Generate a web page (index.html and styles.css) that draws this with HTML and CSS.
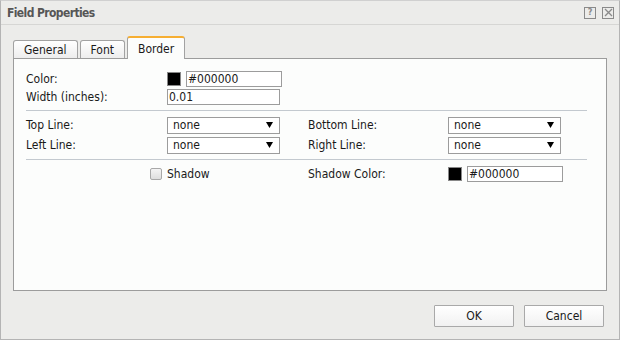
FILE: index.html
```html
<!DOCTYPE html>
<html lang="en">
<head>
    <meta charset="UTF-8">
    <title>Field Properties</title>
    <link rel="stylesheet" href="styles.css">
</head>
<body>
    <div class="dialog">
        <header class="titlebar">
            <h1>Field Properties</h1>
            <div class="title-buttons">
                <span class="title-btn">?</span>
                <span class="title-btn">
                    <svg width="9" height="9" viewBox="0 0 9 9"><path d="M1 1L8 8M8 1L1 8" stroke="#8a8a8a" stroke-width="1.3" fill="none"/></svg>
                </span>
            </div>
        </header>

        <div class="dialog-body">
            <div class="tabs">
                <button class="tab">General</button>
                <button class="tab">Font</button>
                <button class="tab active">Border</button>
            </div>

            <section class="panel">
                <div class="form-grid">
                    <label>Color:</label>
                    <div class="color-field">
                        <span class="swatch"></span>
                        <input class="text-input short" type="text" value="#000000">
                    </div>
                    <span></span><span></span>

                    <label>Width (inches):</label>
                    <input class="text-input" type="text" value="0.01">
                    <span></span><span></span>
                </div>

                <div class="separator"></div>

                <div class="form-grid wide-gap">
                    <label>Top Line:</label>
                    <div class="select"><span>none</span><svg width="7" height="6" viewBox="0 0 7 6"><polygon points="0,0 7,0 3.5,6" fill="#000"/></svg></div>
                    <label>Bottom Line:</label>
                    <div class="select"><span>none</span><svg width="7" height="6" viewBox="0 0 7 6"><polygon points="0,0 7,0 3.5,6" fill="#000"/></svg></div>

                    <label>Left Line:</label>
                    <div class="select"><span>none</span><svg width="7" height="6" viewBox="0 0 7 6"><polygon points="0,0 7,0 3.5,6" fill="#000"/></svg></div>
                    <label>Right Line:</label>
                    <div class="select"><span>none</span><svg width="7" height="6" viewBox="0 0 7 6"><polygon points="0,0 7,0 3.5,6" fill="#000"/></svg></div>
                </div>

                <div class="separator second"></div>

                <div class="form-grid">
                    <div class="check-cell"><span class="checkbox"></span></div>
                    <label>Shadow</label>
                    <label>Shadow Color:</label>
                    <div class="color-field">
                        <span class="swatch"></span>
                        <input class="text-input short" type="text" value="#000000">
                    </div>
                </div>
            </section>

            <footer class="actions">
                <button class="btn">OK</button>
                <button class="btn">Cancel</button>
            </footer>
        </div>
    </div>
</body>
</html>
```

FILE: styles.css
```css
:root {
    --dialog-bg: #ececea;
    --panel-bg: #fcfdfc;
    --border-gray: #9c9c9c;
    --line-blue: #c3c9cf;
    --tab-orange: #f6ae32;
    --text: #1a1a1a;
}

body {
    margin: 0;
    font-family: Tahoma, "DejaVu Sans Condensed", "DejaVu Sans", sans-serif;
    font-size: 12px;
    color: var(--text);
}

.dialog {
    width: 620px;
    height: 340px;
    box-sizing: border-box;
    background-color: var(--dialog-bg);
    border: 1px solid #b4b4b4;
    border-top-color: #d0d0d0;
    display: flex;
    flex-direction: column;
}

.titlebar {
    height: 23px;
    border-bottom: 1px solid #d6d6d4;
    display: flex;
    align-items: center;
    justify-content: space-between;
    padding: 0 5px 0 6px;
}

.titlebar h1 {
    margin: 0;
    font-size: 12px;
    font-weight: bold;
    letter-spacing: -0.6px;
    color: #565656;
}

.title-buttons {
    display: flex;
    gap: 6px;
}

.title-btn {
    width: 10px;
    height: 10px;
    border: 1px solid #8a8a8a;
    display: flex;
    align-items: center;
    justify-content: center;
    font-size: 9px;
    font-weight: bold;
    color: #8a8a8a;
    line-height: 1;
}

.dialog-body {
    flex-grow: 1;
    padding: 12px 12px 0 12px;
    display: flex;
    flex-direction: column;
}

.tabs {
    display: flex;
    align-items: flex-end;
    gap: 2px;
    height: 21px;
}

.tab {
    font: inherit;
    color: var(--text);
    height: 19px;
    padding: 0 10px;
    margin-bottom: -1px;
    border: 1px solid #a2a2a2;
    border-bottom: none;
    border-radius: 3px 3px 0 0;
    background: linear-gradient(#ffffff, #ececec);
}

.tab.active {
    height: 23px;
    padding: 0 10px;
    background: var(--panel-bg);
    border-top: 2px solid var(--tab-orange);
    position: relative;
    z-index: 1;
}

.panel {
    height: 219px;
    background-color: var(--panel-bg);
    border: 1px solid var(--border-gray);
    padding: 12px 19px 0 12px;
}

.form-grid {
    display: grid;
    grid-template-columns: 141px 141px 140px 1fr;
    grid-auto-rows: 16px;
    row-gap: 2px;
    align-items: center;
}

.form-grid.wide-gap {
    row-gap: 4px;
}

.separator {
    height: 1px;
    background-color: var(--line-blue);
    margin: 5px 0 6px;
}

.separator.second {
    margin: 6px 0 6px;
}

.text-input {
    font: inherit;
    color: var(--text);
    width: 113px;
    height: 16px;
    box-sizing: border-box;
    border: 1px solid var(--border-gray);
    padding: 0 1px;
    background: #fff;
}

.text-input.short {
    width: 96px;
}

.color-field {
    display: flex;
    align-items: center;
    gap: 5px;
}

.swatch {
    width: 14px;
    height: 14px;
    box-sizing: border-box;
    background-color: #000;
    border: 1px solid #888;
}

.select {
    width: 113px;
    height: 17px;
    box-sizing: border-box;
    border: 1px solid var(--border-gray);
    background: #fff;
    display: flex;
    align-items: center;
    justify-content: space-between;
    padding: 0 6px 0 5px;
}

.check-cell {
    display: flex;
    justify-content: flex-end;
    padding-right: 5px;
}

.checkbox {
    width: 12px;
    height: 12px;
    box-sizing: border-box;
    border: 1px solid #a8a8a8;
    border-radius: 2px;
    background: linear-gradient(#f4f4f4, #dedede);
}

.actions {
    display: flex;
    justify-content: flex-end;
    gap: 10px;
    padding: 14px 3px 0 0;
}

.btn {
    font: inherit;
    color: var(--text);
    width: 80px;
    height: 22px;
    border: 1px solid #a9a9a9;
    border-radius: 1px;
    background: linear-gradient(#ffffff, #f1f1f1);
}
```
